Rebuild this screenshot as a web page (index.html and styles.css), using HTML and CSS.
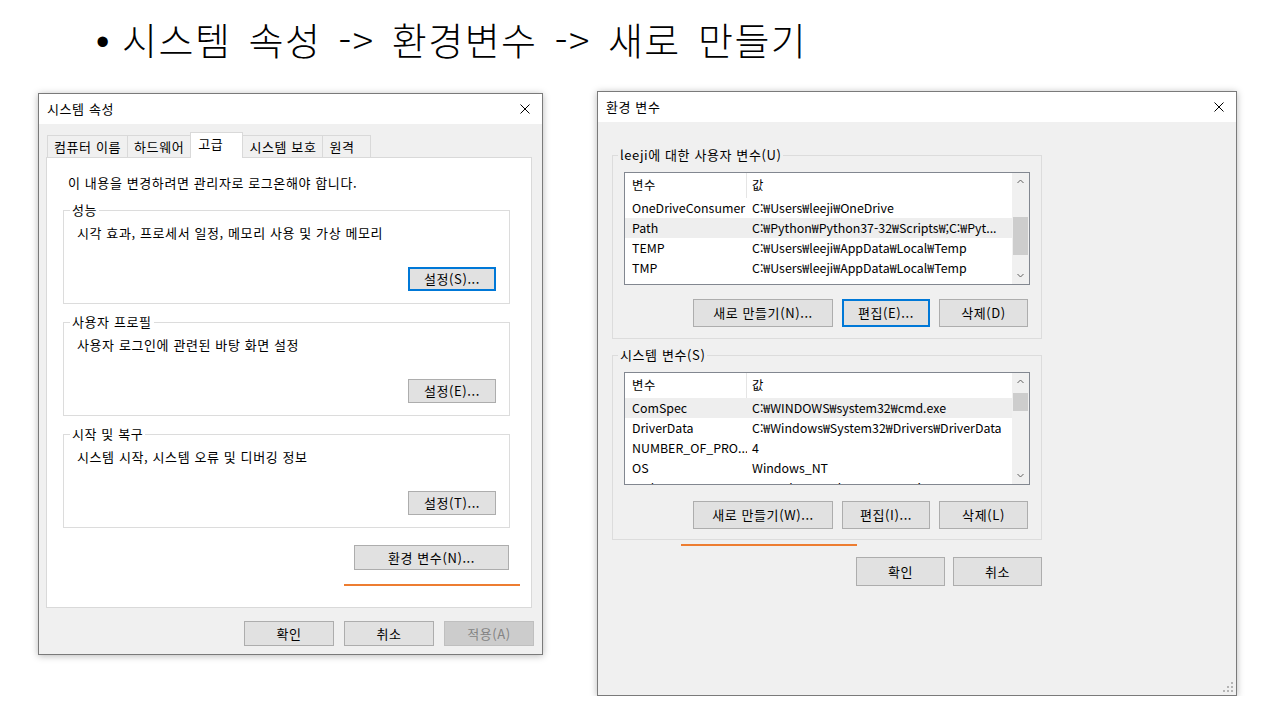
FILE: index.html
```html
<!DOCTYPE html>
<html lang="ko">

<head>
    <meta charset="UTF-8">
    <meta name="viewport" content="width=device-width, initial-scale=1.0">
    <title>환경 변수 새로 만들기</title>
    <link rel="stylesheet" href="styles.css">
</head>

<body>
    <h1 class="slide-title"><span class="bullet">•</span>시스템 속성 -&gt; 환경변수 -&gt; 새로 만들기</h1>

    <div class="desk">
        <!-- 시스템 속성 -->
        <section class="win win-sys">
            <div class="titlebar">
                <span>시스템 속성</span>
                <svg class="close" width="10" height="10" viewBox="0 0 10 10"><path d="M0.5 0.5L9.5 9.5M9.5 0.5L0.5 9.5" stroke="#000" stroke-width="1"/></svg>
            </div>
            <div class="win-body">
                <div class="tabs">
                    <div class="tab">컴퓨터 이름</div>
                    <div class="tab">하드웨어</div>
                    <div class="tab active">고급</div>
                    <div class="tab">시스템 보호</div>
                    <div class="tab tab-last">원격</div>
                </div>
                <div class="tab-panel">
                    <p class="note">이 내용을 변경하려면 관리자로 로그온해야 합니다.</p>

                    <fieldset class="group">
                        <legend>성능</legend>
                        <p>시각 효과, 프로세서 일정, 메모리 사용 및 가상 메모리</p>
                        <button class="btn btn-set btn-focus">설정(S)...</button>
                    </fieldset>

                    <fieldset class="group">
                        <legend>사용자 프로필</legend>
                        <p>사용자 로그인에 관련된 바탕 화면 설정</p>
                        <button class="btn btn-set">설정(E)...</button>
                    </fieldset>

                    <fieldset class="group">
                        <legend>시작 및 복구</legend>
                        <p>시스템 시작, 시스템 오류 및 디버깅 정보</p>
                        <button class="btn btn-set">설정(T)...</button>
                    </fieldset>

                    <div class="env-row">
                        <button class="btn btn-env">환경 변수(N)...</button>
                    </div>
                    <div class="mark mark-sys"></div>
                </div>
                <div class="dlg-buttons">
                    <button class="btn btn-dlg">확인</button>
                    <button class="btn btn-dlg">취소</button>
                    <button class="btn btn-dlg" disabled>적용(A)</button>
                </div>
            </div>
        </section>

        <!-- 환경 변수 -->
        <section class="win win-env">
            <div class="titlebar">
                <span>환경 변수</span>
                <svg class="close" width="10" height="10" viewBox="0 0 10 10"><path d="M0.5 0.5L9.5 9.5M9.5 0.5L0.5 9.5" stroke="#000" stroke-width="1"/></svg>
            </div>
            <div class="win-body">
                <div class="env-col">
                    <fieldset class="var-group">
                        <legend>leeji에 대한 사용자 변수(U)</legend>
                        <div class="list">
                            <div class="list-table">
                                <div class="list-head"><div class="cell-name">변수</div><div class="cell-val">값</div></div>
                                <div class="list-row"><div class="cell-name">OneDriveConsumer</div><div class="cell-val">C:₩Users₩leeji₩OneDrive</div></div>
                                <div class="list-row sel"><div class="cell-name">Path</div><div class="cell-val">C:₩Python₩Python37-32₩Scripts₩;C:₩Pyt...</div></div>
                                <div class="list-row"><div class="cell-name">TEMP</div><div class="cell-val">C:₩Users₩leeji₩AppData₩Local₩Temp</div></div>
                                <div class="list-row"><div class="cell-name">TMP</div><div class="cell-val">C:₩Users₩leeji₩AppData₩Local₩Temp</div></div>
                            </div>
                            <div class="vscroll">
                                <div class="sb-arrow"><svg width="7" height="5" viewBox="0 0 7 5"><polyline points="0.5,4 3.5,1 6.5,4" fill="none" stroke="#606060"/></svg></div>
                                <div class="sb-track"><div class="sb-thumb" style="margin-top: 27px; height: 38px;"></div></div>
                                <div class="sb-arrow"><svg width="7" height="5" viewBox="0 0 7 5"><polyline points="0.5,1 3.5,4 6.5,1" fill="none" stroke="#606060"/></svg></div>
                            </div>
                        </div>
                        <div class="var-buttons">
                            <button class="btn btn-new">새로 만들기(N)...</button>
                            <button class="btn btn-edit btn-focus">편집(E)...</button>
                            <button class="btn btn-del">삭제(D)</button>
                        </div>
                    </fieldset>

                    <fieldset class="var-group var-group-sys">
                        <legend>시스템 변수(S)</legend>
                        <div class="list">
                            <div class="list-table">
                                <div class="list-head"><div class="cell-name">변수</div><div class="cell-val">값</div></div>
                                <div class="list-row sel"><div class="cell-name">ComSpec</div><div class="cell-val">C:₩WINDOWS₩system32₩cmd.exe</div></div>
                                <div class="list-row"><div class="cell-name">DriverData</div><div class="cell-val">C:₩Windows₩System32₩Drivers₩DriverData</div></div>
                                <div class="list-row"><div class="cell-name">NUMBER_OF_PRO...</div><div class="cell-val">4</div></div>
                                <div class="list-row"><div class="cell-name">OS</div><div class="cell-val">Windows_NT</div></div>
                                <div class="list-row"><div class="cell-name">Path</div><div class="cell-val">C:₩Python₩Python37-32₩Scripts₩;C:₩Pyt...</div></div>
                            </div>
                            <div class="vscroll">
                                <div class="sb-arrow"><svg width="7" height="5" viewBox="0 0 7 5"><polyline points="0.5,4 3.5,1 6.5,4" fill="none" stroke="#606060"/></svg></div>
                                <div class="sb-track"><div class="sb-thumb" style="margin-top: 3px; height: 18px;"></div></div>
                                <div class="sb-arrow"><svg width="7" height="5" viewBox="0 0 7 5"><polyline points="0.5,1 3.5,4 6.5,1" fill="none" stroke="#606060"/></svg></div>
                            </div>
                        </div>
                        <div class="var-buttons">
                            <button class="btn btn-new">새로 만들기(W)...</button>
                            <button class="btn btn-edit">편집(I)...</button>
                            <button class="btn btn-del">삭제(L)</button>
                        </div>
                    </fieldset>

                    <div class="dlg-buttons env-dlg-buttons">
                        <button class="btn btn-ok">확인</button>
                        <button class="btn btn-ok">취소</button>
                    </div>
                </div>
                <svg class="grip" width="10" height="10" viewBox="0 0 10 10">
                    <rect x="8" y="0" width="2" height="2" fill="#b4b4b4"/>
                    <rect x="4" y="4" width="2" height="2" fill="#b4b4b4"/>
                    <rect x="8" y="4" width="2" height="2" fill="#b4b4b4"/>
                    <rect x="0" y="8" width="2" height="2" fill="#b4b4b4"/>
                    <rect x="4" y="8" width="2" height="2" fill="#b4b4b4"/>
                    <rect x="8" y="8" width="2" height="2" fill="#b4b4b4"/>
                </svg>
            </div>
            <div class="mark mark-env"></div>
        </section>
    </div>
</body>

</html>
```

FILE: styles.css
```css
* {
    box-sizing: border-box;
}

body {
    margin: 0;
    background: #fff;
    color: #000;
    font-family: "Noto Sans CJK KR", sans-serif;
}

.slide-title {
    margin: 0;
    height: 60px;
    padding: 19px 0 0 96px;
    font-size: 38px;
    font-weight: 300;
    line-height: 40px;
    letter-spacing: 1.5px;
    word-spacing: 5px;
    white-space: nowrap;
}

.bullet {
    display: inline-block;
    width: 26px;
    letter-spacing: 0;
    font-family: "Liberation Sans", sans-serif;
}

.desk {
    display: flex;
    align-items: flex-start;
    gap: 54px;
    padding: 31px 0 0 38px;
}

/* window frame */

.win {
    position: relative;
    background: #f0f0f0;
    border: 1px solid #7a7a7a;
    box-shadow: 0 1px 7px rgba(0, 0, 0, 0.28);
    font-size: 13px;
    line-height: 16px;
    letter-spacing: 0.6px;
}

.win-sys {
    width: 505px;
    height: 562px;
    margin-top: 2px;
}

.win-env {
    width: 640px;
    height: 605px;
    display: flex;
    flex-direction: column;
}

.titlebar {
    height: 30px;
    flex: none;
    background: #fff;
    display: flex;
    align-items: center;
    justify-content: space-between;
    padding: 0 12px 0 8px;
}

.close {
    display: block;
}

.btn {
    font: inherit;
    letter-spacing: inherit;
    color: #000;
    background: #e1e1e1;
    border: 1px solid #adadad;
    padding: 0;
    text-align: center;
}

.btn-focus {
    border-color: #0078d7;
    box-shadow: inset 0 0 0 1px #0078d7;
}

.btn:disabled {
    background: #cccccc;
    border-color: #bfbfbf;
    color: #838383;
}

.mark {
    position: absolute;
    width: 176px;
    height: 2px;
    background: #ed7d31;
}

/* 시스템 속성 */

.win-sys .win-body {
    padding: 11px 8px 0 7px;
}

.tabs {
    display: flex;
    align-items: flex-end;
    height: 22px;
    padding-left: 1px;
}

.tab {
    height: 22px;
    margin-left: -1px;
    padding: 0 6px;
    line-height: 21px;
    background: #f0f0f0;
    border: 1px solid #d9d9d9;
    border-bottom: 0;
}

.tab:first-child {
    margin-left: 0;
}

.tab-last {
    padding-right: 15px;
}

.tab.active {
    position: relative;
    z-index: 1;
    height: 26px;
    margin-bottom: -1px;
    padding: 0 19px 0 7px;
    line-height: 22px;
    background: #fff;
}

.tab-panel {
    position: relative;
    height: 451px;
    margin-right: 2px;
    padding: 17px 21px 0 16px;
    background: #fff;
    border: 1px solid #d9d9d9;
}

.note {
    margin: 0 0 11px 5px;
}

.group {
    margin: 0;
    padding: 7px 13px 12px;
    border: 1px solid #dcdcdc;
}

.group + .group {
    margin-top: 10px;
}

.group legend {
    margin-left: -7px;
    padding: 0 2px;
}

.group p {
    margin: 0;
}

.btn-set {
    display: block;
    width: 88px;
    height: 24px;
    margin: 26px 0 0 auto;
}

.env-row {
    display: flex;
    justify-content: flex-end;
    margin: 17px 1px 0 0;
}

.btn-env {
    width: 155px;
    height: 25px;
}

.mark-sys {
    left: 297px;
    top: 426px;
}

.dlg-buttons {
    display: flex;
    justify-content: flex-end;
    gap: 10px;
    margin-top: 13px;
}

.btn-dlg {
    width: 90px;
    height: 25px;
}

/* 환경 변수 */

.win-env .win-body {
    flex: 1;
    display: flex;
    flex-direction: column;
    padding: 25px 0 0 14px;
}

.env-col {
    width: 430px;
}

.var-group {
    margin: 0;
    padding: 9px 11px 11px;
    border: 1px solid #dcdcdc;
}

.var-group + .var-group {
    margin-top: 8px;
}

.var-group legend {
    margin-left: -6px;
    padding: 0 2px;
}

.list {
    display: flex;
    height: 113px;
    background: #fff;
    border: 1px solid #828790;
    overflow: hidden;
}

.list-table {
    flex: 1;
    min-width: 0;
    font-size: 12.4px;
    letter-spacing: 0;
}

.list-head,
.list-row {
    display: flex;
}

.list-head {
    height: 25px;
    line-height: 25px;
    letter-spacing: 0.6px;
}

.list-row {
    height: 20px;
    line-height: 20px;
}

.list-row.sel {
    background: #eeeeee;
}

.cell-name {
    width: 122px;
    flex: none;
    padding-left: 7px;
    white-space: nowrap;
    overflow: hidden;
}

.list-head .cell-name {
    border-right: 1px solid #e5e5e5;
}

.cell-val {
    flex: 1;
    min-width: 0;
    padding-left: 5px;
    white-space: nowrap;
    overflow: hidden;
}

.vscroll {
    width: 17px;
    flex: none;
    display: flex;
    flex-direction: column;
    background: #f0f0f0;
}

.sb-arrow {
    height: 17px;
    display: flex;
    align-items: center;
    justify-content: center;
}

.sb-arrow svg {
    display: block;
}

.sb-track {
    flex: 1;
}

.sb-thumb {
    margin: 0 1px;
    background: #cdcdcd;
}

.var-buttons {
    display: flex;
    justify-content: flex-end;
    gap: 9px;
    margin-top: 14px;
    padding-right: 2px;
}

.var-group-sys .var-buttons {
    margin-top: 16px;
}

.var-group-sys {
    padding-bottom: 10px;
}

.var-buttons .btn {
    height: 28px;
}

.btn-new {
    width: 140px;
}

.btn-edit {
    width: 88px;
}

.btn-del {
    width: 89px;
}

.env-dlg-buttons {
    gap: 8px;
    margin-top: 17px;
}

.btn-ok {
    width: 89px;
    height: 29px;
}

.grip {
    display: block;
    align-self: flex-end;
    margin: auto 3px 3px 0;
}

.mark-env {
    left: 83px;
    top: 452px;
}
```
